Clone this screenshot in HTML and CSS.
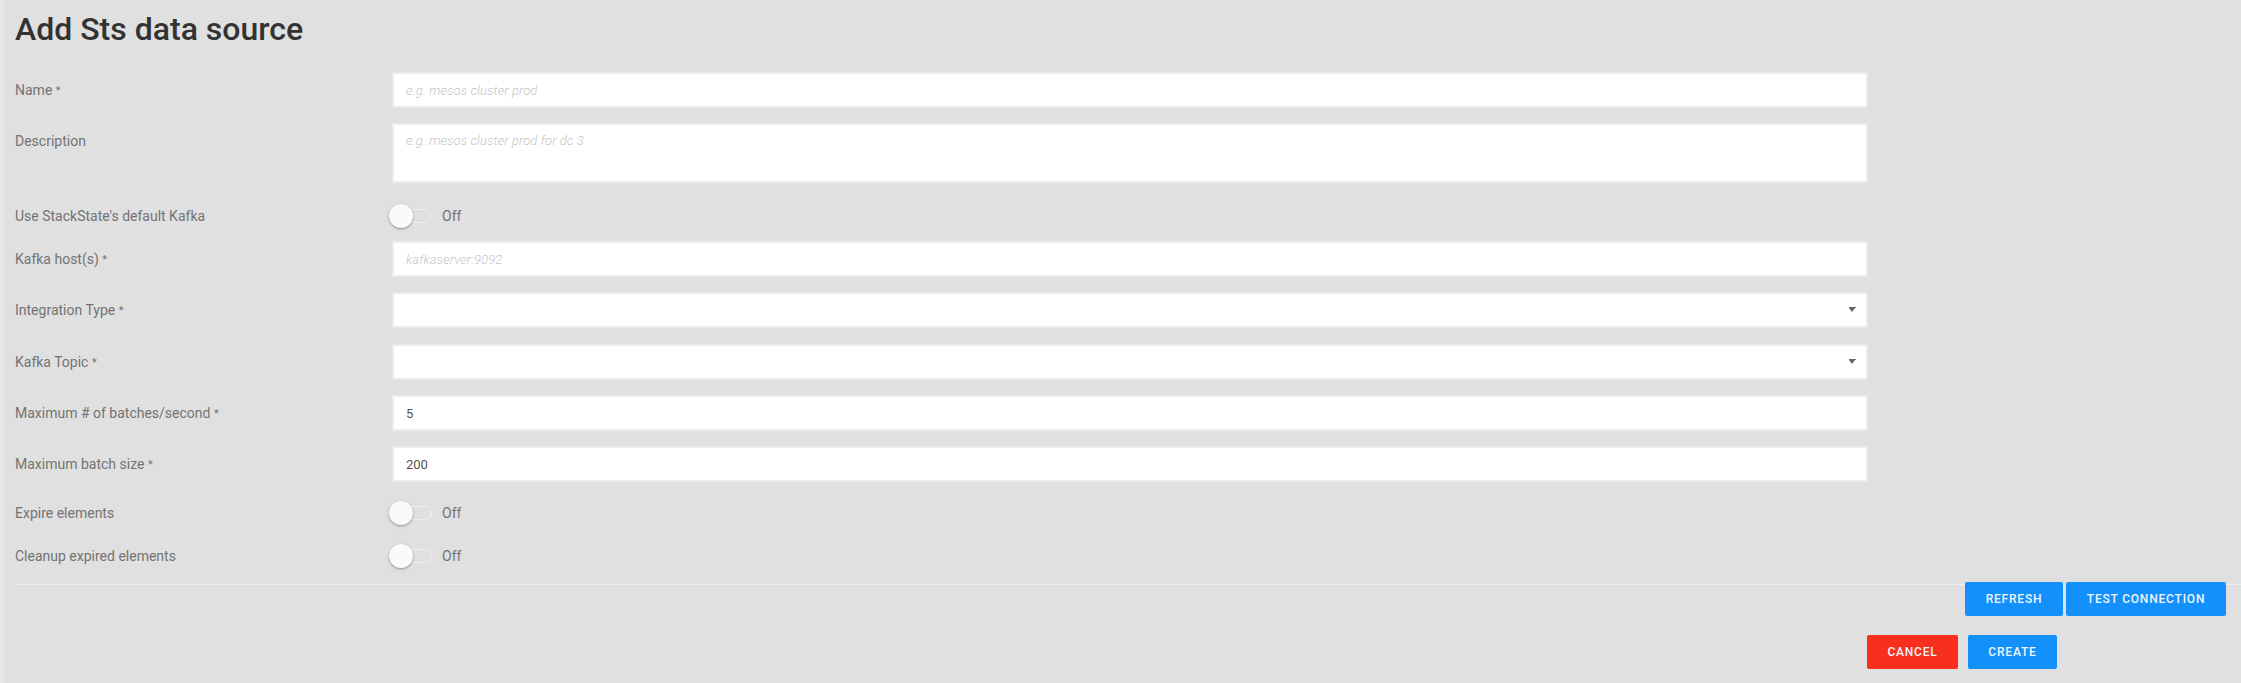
FILE: index.html
```html
<!DOCTYPE html>
<html>
<head>
<meta charset="utf-8">
<link rel="stylesheet" href="styles.css">
</head>
<body>
<div class="page">
  <h1 class="title">Add Sts data source</h1>
  <div class="form">
    <div class="row r-name">
      <div class="label">Name <span class="req">*</span></div>
      <div class="input"><span class="ph">e.g. mesos cluster prod</span></div>
    </div>
    <div class="row r-desc">
      <div class="label">Description</div>
      <div class="input textarea"><span class="ph">e.g. mesos cluster prod for dc 3</span></div>
    </div>
    <div class="row toggle-row r-t1">
      <div class="label">Use StackState's default Kafka</div>
      <div class="toggle-wrap"><span class="toggle"><span class="track"></span><span class="knob"></span></span><span class="off">Off</span></div>
    </div>
    <div class="row r-host">
      <div class="label">Kafka host(s) <span class="req">*</span></div>
      <div class="input"><span class="ph">kafkaserver:9092</span></div>
    </div>
    <div class="row r-int">
      <div class="label">Integration Type <span class="req">*</span></div>
      <div class="input select"><span class="caret"></span></div>
    </div>
    <div class="row r-topic">
      <div class="label">Kafka Topic <span class="req">*</span></div>
      <div class="input select"><span class="caret"></span></div>
    </div>
    <div class="row r-batches">
      <div class="label">Maximum # of batches/second <span class="req">*</span></div>
      <div class="input"><span class="val">5</span></div>
    </div>
    <div class="row r-size">
      <div class="label">Maximum batch size <span class="req">*</span></div>
      <div class="input"><span class="val">200</span></div>
    </div>
    <div class="row toggle-row r-t2">
      <div class="label">Expire elements</div>
      <div class="toggle-wrap"><span class="toggle"><span class="track"></span><span class="knob"></span></span><span class="off">Off</span></div>
    </div>
    <div class="row toggle-row r-t3">
      <div class="label">Cleanup expired elements</div>
      <div class="toggle-wrap"><span class="toggle"><span class="track"></span><span class="knob"></span></span><span class="off">Off</span></div>
    </div>
  </div>
  <div class="divider"></div>
  <div class="actions actions-top">
    <button class="btn blue b-refresh">REFRESH</button>
    <button class="btn blue b-test">TEST CONNECTION</button>
  </div>
  <div class="actions actions-bottom">
    <button class="btn red b-cancel">CANCEL</button>
    <button class="btn blue b-create">CREATE</button>
  </div>
</div>
</body>
</html>
```

FILE: styles.css
```css
html, body {
  margin: 0;
  padding: 0;
  height: 100%;
}
body {
  background: #e0e0e0;
  font-family: Roboto, "Liberation Sans", sans-serif;
  overflow: hidden;
}
.page {
  min-height: 683px;
  box-sizing: border-box;
  padding-left: 15px;
  background: linear-gradient(to right, #e7e7e7 0px, #e6e6e6 3px, #e2e2e2 5px, #e0e0e0 7px);
}
.title {
  margin: 0;
  padding-top: 9px;
  font-size: 32px;
  line-height: 40px;
  font-weight: 500;
  color: #333333;
  letter-spacing: 0;
}
.form {
  margin-top: 23px;
  display: flex;
  flex-direction: column;
}
.row {
  display: grid;
  grid-template-columns: 377px 1476px;
  height: 36px;
  margin-bottom: 15px;
}
.label {
  font-size: 14px;
  line-height: 36px;
  height: 36px;
  color: #737373;
  letter-spacing: 0;
  white-space: nowrap;
}
.req {
  font-size: 11px;
  line-height: 1;
  vertical-align: 1px;
}
.input {
  position: relative;
  box-sizing: border-box;
  height: 36px;
  background: #ffffff;
  border: 2px solid #ebebeb;
  padding: 0 12px;
  display: flex;
  align-items: center;
  font-size: 13px;
}
.r-desc { height: 60px; }
.textarea {
  height: 60px;
  align-items: flex-start;
  padding-top: 8px;
}
.ph {
  font-style: italic;
  color: #c6c6c6;
  font-weight: 300;
  letter-spacing: 0.1px;
}
.val {
  color: #555555;
}
.caret {
  position: absolute;
  right: 11px;
  top: 50%;
  margin-top: -2px;
  width: 0;
  height: 0;
  border-left: 3.5px solid transparent;
  border-right: 3.5px solid transparent;
  border-top: 4px solid #666666;
}
.caret::before {
  content: "";
  position: absolute;
  left: -3.5px;
  top: -5px;
  width: 7px;
  height: 1px;
  background: #666666;
}
.r-t1 { height: 36px; margin-bottom: 7px; }
.r-int { margin-bottom: 16px; }
.r-t2 { height: 32px; margin-bottom: 11px; }
.r-t3 { height: 32px; margin-bottom: 12px; }
.toggle-row { align-items: center; }
.toggle-row .label {
  height: auto;
  line-height: 20px;
}
.toggle-wrap {
  display: flex;
  align-items: center;
}
.toggle {
  position: relative;
  display: inline-block;
  width: 43px;
  height: 24px;
  margin-left: -3px;
}
.track {
  position: absolute;
  left: 3px;
  right: 0;
  top: 5px;
  height: 14px;
  box-sizing: border-box;
  border: 1px solid #f0f0f0;
  border-radius: 7px;
}
.knob {
  position: absolute;
  left: 0;
  top: 0;
  width: 24px;
  height: 24px;
  border-radius: 50%;
  background: #fafafa;
  box-shadow: 0 1px 3px rgba(0, 0, 0, 0.28), 0 1px 1px rgba(0, 0, 0, 0.12);
}
.off {
  margin-left: 10px;
  font-size: 14px;
  color: #737373;
}
.divider {
  height: 1px;
  background: #efefef;
}
.actions {
  display: flex;
  justify-content: flex-end;
}
.actions-top {
  margin-top: -3px;
  padding-right: 15px;
  gap: 3px;
}
.actions-bottom {
  margin-top: 19px;
  padding-right: 184px;
  gap: 10px;
}
.btn {
  height: 34px;
  border: none;
  border-radius: 2px;
  font-family: Roboto, "Liberation Sans", sans-serif;
  font-size: 12px;
  font-weight: 500;
  letter-spacing: 0.8px;
  color: #eef6ff;
  padding: 0;
  white-space: nowrap;
  cursor: pointer;
}
.blue { background: #1390fa; }
.red { background: #f82f1d; }
.b-refresh { width: 98px; }
.b-test { width: 160px; }
.b-cancel { width: 91px; }
.b-create { width: 89px; }
```
